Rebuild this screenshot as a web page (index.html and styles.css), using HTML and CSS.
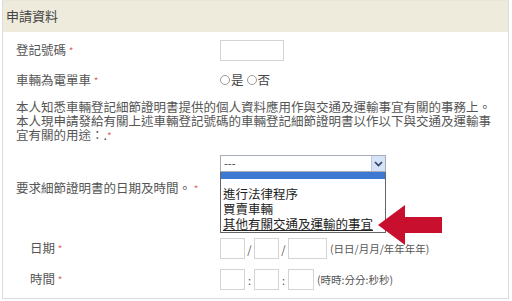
FILE: index.html
```html
<!DOCTYPE html>
<html lang="zh-Hant">
<head>
    <meta charset="UTF-8">
    <title>申請資料</title>
    <link rel="stylesheet" href="styles.css">
</head>
<body>
<div class="panel">
    <div class="panel-head">申請資料</div>
    <div class="panel-body">
        <div class="row row-reg">
            <span class="lbl">登記號碼 <span class="req">*</span></span>
            <span class="box box-reg"></span>
        </div>
        <div class="row row-moto">
            <span class="lbl">車輛為電單車 <span class="req">*</span></span>
            <span class="radios">
                <span class="radio"></span><span class="opt">是</span>
                <span class="radio"></span><span class="opt">否</span>
            </span>
        </div>
        <p class="notice">本人知悉車輛登記細節證明書提供的個人資料應用作與交通及運輸事宜有關的事務上。<br>本人現申請發給有關上述車輛登記號碼的車輛登記細節證明書以作以下與交通及運輸事宜有關的用途：.<span class="req">*</span></p>
        <div class="row row-purpose">
            <span class="lbl"></span>
            <div class="select-wrap">
                <div class="select">---<span class="caret"><svg width="9" height="6" viewBox="0 0 9 6"><path d="M1 1 L4.5 4.5 L8 1" fill="none" stroke="#2b3f66" stroke-width="1.6"/></svg></span></div>
                <!-- list is shown open over the rows below -->
                <ul class="options">
                    <li class="hl"></li>
                    <li>進行法律程序</li>
                    <li>買賣車輛</li>
                    <li class="last">其他有關交通及運輸的事宜</li>
                </ul>
            </div>
        </div>
        <div class="row row-when">
            <span class="lbl">要求細節證明書的日期及時間。 <span class="req">*</span></span>
        </div>
        <div class="row row-date sub">
            <span class="lbl">日期 <span class="req">*</span></span>
            <span class="box"></span><span class="sep">/</span><span class="box"></span><span class="sep">/</span><span class="box box-year"></span>
            <span class="hint">(日日/月月/年年年年)</span>
        </div>
        <div class="row row-time sub">
            <span class="lbl">時間 <span class="req">*</span></span>
            <span class="box"></span><span class="sep">:</span><span class="box"></span><span class="sep">:</span><span class="box box-sec"></span>
            <span class="hint">(時時:分分:秒秒)</span>
        </div>
    </div>
    <svg class="pointer" width="70" height="48" viewBox="0 0 70 48">
        <polygon points="2,23 29,3 29,15 66,15 66,31 29,31 29,43" fill="#c8102e"/>
    </svg>
</div>
</body>
</html>
```

FILE: styles.css
```css
body {margin: 0; padding: 0; background: #fff;
    font-family: "Noto Sans CJK TC", "Noto Sans", sans-serif; font-size: 12.5px; color: #555;}
.panel {position: relative; margin: 0 3px 0 2px; height: 297px; border: 1px solid #dcdcdc; border-top-color: #e8e6dc;}
.panel-head {height: 31px; line-height: 30px; padding-left: 3px; background: #eeebdc; color: #444; font-size: 13px;}
.panel-body {padding: 8px 0 0 13px;}

.row {display: flex; align-items: center; line-height: 18px;}
.lbl {width: 204px; flex: none; white-space: nowrap;}
.req {color: #e06a6a; font-size: 10px;}

.box {display: inline-block; width: 23px; height: 19px; border: 1px solid #d4d4d4; background: #fff;}
.box-reg {width: 62px;}
.box-year {width: 37px;}
.box-sec {width: 24px;}

.row-reg {height: 21px;}
.row-moto {margin-top: 10px; height: 18px;}
.radios {display: flex; align-items: center;}
.radio {width: 8px; height: 8px; border: 1px solid #999; border-radius: 50%; margin-right: 1px;}
.opt {margin-right: 3px; color: #444;}

.notice {margin: 11px 0 0 0; width: 484px; line-height: 14px;}

.row-purpose {margin-top: 12px; height: 17px;}
.select-wrap {position: relative; width: 166px;}
.select {height: 15px; line-height: 14px; border: 1px solid #a5acb5; padding-left: 3px; color: #333;
    font-size: 11px; position: relative;}
.caret {position: absolute; right: 0; top: 0; width: 13px; height: 15px; background: #d6e2f5;
    border-left: 1px solid #b9c9e4; display: flex; align-items: center; justify-content: center;}
.options {position: absolute; left: 0; top: 17px; width: 164px; margin: 0; padding: 0 0 1px 0;
    list-style: none; background: #fff; border: 1px solid #666; border-top: none; color: #222;}
.options li {height: 15px; line-height: 15px; padding-left: 2px; white-space: nowrap;}
.options li.hl {height: 7px; background: #3d78d3; margin-bottom: 7px;}
.options li.last {text-decoration: underline;}

.row-when {margin-top: 7px; height: 18px;}
.sub .lbl {width: 190px; padding-left: 14px;}
.row-date {margin-top: 41px; height: 21px;}
.row-time {margin-top: 10px; height: 21px;}
.sep {width: 9px; text-align: center; color: #555; font-size: 11px;}
.hint {margin-left: 3px; font-size: 10.5px; color: #555;}

.pointer {position: absolute; left: 373px; top: 201px;}
```
